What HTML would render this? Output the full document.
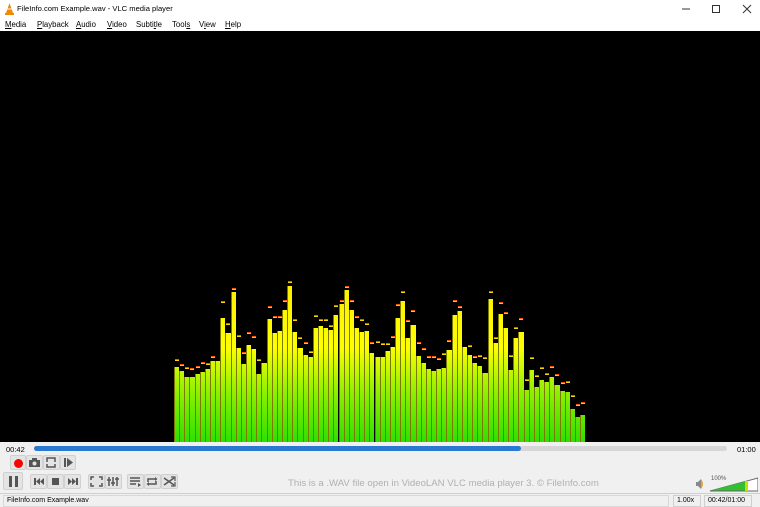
<!DOCTYPE html>
<html><head><meta charset="utf-8">
<style>
*{margin:0;padding:0;box-sizing:border-box}
body{width:760px;height:507px;position:relative;overflow:hidden;background:#f0f0f0;font-family:"Liberation Sans","DejaVu Sans",sans-serif;font-size:11px;color:#000}
.title{position:absolute;left:0;top:0;width:760px;height:17px;background:#fff}
.title span{position:absolute;left:17px;top:4px;font-size:7.6px}
.menu{position:absolute;left:0;top:17px;width:760px;height:14px;background:#fff}
.menu span{position:absolute;top:3px;font-size:7.8px}
.video{position:absolute;left:0;top:31px;width:760px;height:411px;background:#000}
.bar{position:absolute;background:linear-gradient(to top,#2ee000 0px,#8ef000 50px,#ffff00 95px,#ffee00 160px);border-left:1px solid #7a7a00}
.pk{position:absolute;height:2px;background:#ffd400;border-top:1px solid #ff5000}
.seek{position:absolute;left:34px;top:446px;width:693px;height:5px;background:#d6d6d6;border-radius:3px}
.seek div{width:487px;height:5px;background:#2a79d0;border-radius:3px}
.btn{position:absolute;background:#e4e4e4;border:1px solid #d0d0d0;border-radius:2px}
.status{position:absolute;left:0;top:493px;width:760px;height:14px;background:#f0f0f0;border-top:1px solid #cfcfcf}
.sbox{position:absolute;top:495px;height:12px;border:1px solid #cfcfcf;font-size:7px;line-height:10px;padding-left:3px}
</style></head><body>
<div class="title">
<svg style="position:absolute;left:4px;top:3px" width="11" height="12" viewBox="0 0 11 12"><path d="M5.5 0 L9 10 H2 Z" fill="#f08a00"/><rect x="1" y="10" width="9" height="2" fill="#f08a00"/><path d="M3.5 6 H7.5" stroke="#fff" stroke-width="1"/></svg>
<span>FileInfo.com Example.wav - VLC media player</span>
<svg style="position:absolute;left:682px;top:4px" width="70" height="10"><path d="M0 5H8" stroke="#333"/><rect x="30.5" y="1.5" width="7" height="7" fill="none" stroke="#333"/><path d="M61 1L69 9M69 1L61 9" stroke="#333"/></svg>
</div>
<div class="menu">
<span style="left:5px"><u>M</u>edia</span><span style="left:37px"><u>P</u>layback</span><span style="left:76px"><u>A</u>udio</span><span style="left:107px"><u>V</u>ideo</span><span style="left:136px">Subti<u>t</u>le</span><span style="left:172px">Tool<u>s</u></span><span style="left:199px">V<u>i</u>ew</span><span style="left:225px"><u>H</u>elp</span>
</div>
<div class="video" id="v"></div>
<div style="position:absolute;left:6px;top:445px;font-size:7.5px">00:42</div>
<div style="position:absolute;left:737px;top:445px;font-size:7.5px">01:00</div>
<div class="seek"><div></div></div>
<div class="btn" style="left:10px;top:455px;width:16px;height:15px"><div style="position:absolute;left:3px;top:3px;width:9px;height:9px;border-radius:50%;background:#f00"></div></div>
<div class="btn" style="left:26px;top:455px;width:17px;height:15px"><svg width="15" height="13"><rect x="2" y="4" width="11" height="7" fill="#555"/><rect x="5" y="2" width="5" height="3" fill="#555"/><circle cx="7.5" cy="7.5" r="2" fill="#e4e4e4"/></svg></div>
<div class="btn" style="left:43px;top:455px;width:17px;height:15px"><svg width="15" height="13"><path d="M3 6V2H11V6M3 8V11H11V8" stroke="#555" fill="none" stroke-width="1.5"/></svg></div>
<div class="btn" style="left:60px;top:455px;width:16px;height:15px"><svg width="14" height="13"><rect x="3" y="2" width="2" height="9" fill="#555"/><path d="M6 2L12 6.5L6 11Z" fill="#555"/></svg></div>
<div class="btn" style="left:3px;top:472px;width:20px;height:18px"><div style="position:absolute;left:5px;top:3px;width:3px;height:11px;background:#555"></div><div style="position:absolute;left:11px;top:3px;width:3px;height:11px;background:#555"></div></div>
<div class="btn" style="left:30px;top:474px;width:17px;height:15px"><svg width="15" height="13"><rect x="3" y="3" width="2" height="7" fill="#555"/><path d="M9 3L5 6.5L9 10ZM13 3L9 6.5L13 10Z" fill="#555"/></svg></div>
<div class="btn" style="left:47px;top:474px;width:17px;height:15px"><div style="position:absolute;left:4px;top:3px;width:7px;height:7px;background:#555"></div></div>
<div class="btn" style="left:64px;top:474px;width:17px;height:15px"><svg width="15" height="13"><rect x="11" y="3" width="2" height="7" fill="#555"/><path d="M3 3L7 6.5L3 10ZM7 3L11 6.5L7 10Z" fill="#555"/></svg></div>
<div class="btn" style="left:88px;top:474px;width:17px;height:15px"><svg width="15" height="13"><path d="M2 5V2H5M10 2H13V5M13 8V11H10M5 11H2V8" stroke="#555" fill="none" stroke-width="1.5"/></svg></div>
<div class="btn" style="left:105px;top:474px;width:17px;height:15px"><svg width="15" height="13"><path d="M3 2V11M7 2V11M11 2V11" stroke="#555" stroke-width="1.5"/><path d="M1 5H5M5 8H9M9 4H13" stroke="#555" stroke-width="1.5"/></svg></div>
<div class="btn" style="left:127px;top:474px;width:17px;height:15px"><svg width="15" height="13"><path d="M2 3H12M2 6H12M2 9H8" stroke="#555" stroke-width="1.5"/><path d="M10 8L13 10L10 12Z" fill="#555"/></svg></div>
<div class="btn" style="left:144px;top:474px;width:17px;height:15px"><svg width="15" height="13"><path d="M3 7V4H11M11 6V9H3" stroke="#555" fill="none" stroke-width="1.5"/><path d="M10 2L12.5 4L10 6ZM4 7L1.5 9L4 11Z" fill="#555"/></svg></div>
<div class="btn" style="left:161px;top:474px;width:17px;height:15px"><svg width="15" height="13"><path d="M2 3L12 10M2 10L12 3" stroke="#555" stroke-width="1.5"/><path d="M9 2H13V6M13 7V11H9" stroke="#555" fill="none" stroke-width="1.2"/></svg></div>
<div style="position:absolute;left:288px;top:478px;font-size:9.6px;color:#b0b0b0">This is a .WAV file open in VideoLAN VLC media player 3. © FileInfo.com</div>
<svg style="position:absolute;left:694px;top:475px" width="64" height="18"><path d="M2 7H4L7 4V14L4 11H2Z" fill="#888"/><path d="M7 4Q11 9 7 14Z" fill="#f0a030"/><path d="M16 16L64 3V16Z" fill="#fff" stroke="#666"/><path d="M17 15.5L53 6V15.5Z" fill="#30c030"/><rect x="51" y="6" width="3" height="10" fill="#c8e000"/></svg>
<div style="position:absolute;left:711px;top:476px;font-size:6px;color:#555">100%</div>
<div class="status"></div>
<div class="sbox" style="left:3px;width:666px;border-color:#d8d8d8">FileInfo.com Example.wav</div>
<div class="sbox" style="left:673px;width:28px">1.00x</div>
<div class="sbox" style="left:704px;width:48px">00:42/01:00</div>
<script>
(function(){
var t=[262,272,292,292,282,275,268,243,243,113,158,37,205,251,194,207,282,248,117,158,152,89,18,155,205,225,231,145,137,145,149,104,73,30,89,143,157,154,220,232,232,214,201,115,62,174,135,229,249,267,273,268,264,209,105,92,202,225,248,259,280,58,189,101,145,270,175,157,330,270,320,300,307,292,316,334,336,388,412,405];
var po=[15,10,22,20,15,20,10,5,0,40,20,5,30,25,30,30,35,0,30,40,35,20,5,30,25,30,10,30,10,20,5,20,5,3,20,25,30,15,25,40,35,15,25,35,20,45,35,35,35,30,35,25,35,20,35,5,0,20,10,25,40,15,10,25,40,35,25,35,25,30,25,30,20,25,25,20,25,35,30,30];
var v=document.getElementById('v'),h='';
for(var i=0;i<80;i++){var ty=280+t[i]/3,x=174+i*5.14;
var tv=ty-31;
h+='<div class="bar" style="left:'+x.toFixed(1)+'px;width:5.2px;top:'+tv.toFixed(1)+'px;height:'+(411-tv).toFixed(1)+'px"></div>';
var p=tv-po[i]/3-3; if(po[i]>0)h+='<div class="pk" style="left:'+(x+1).toFixed(1)+'px;width:4px;top:'+p.toFixed(1)+'px"></div>';}
v.innerHTML=h;
})();
</script>
</body></html>
